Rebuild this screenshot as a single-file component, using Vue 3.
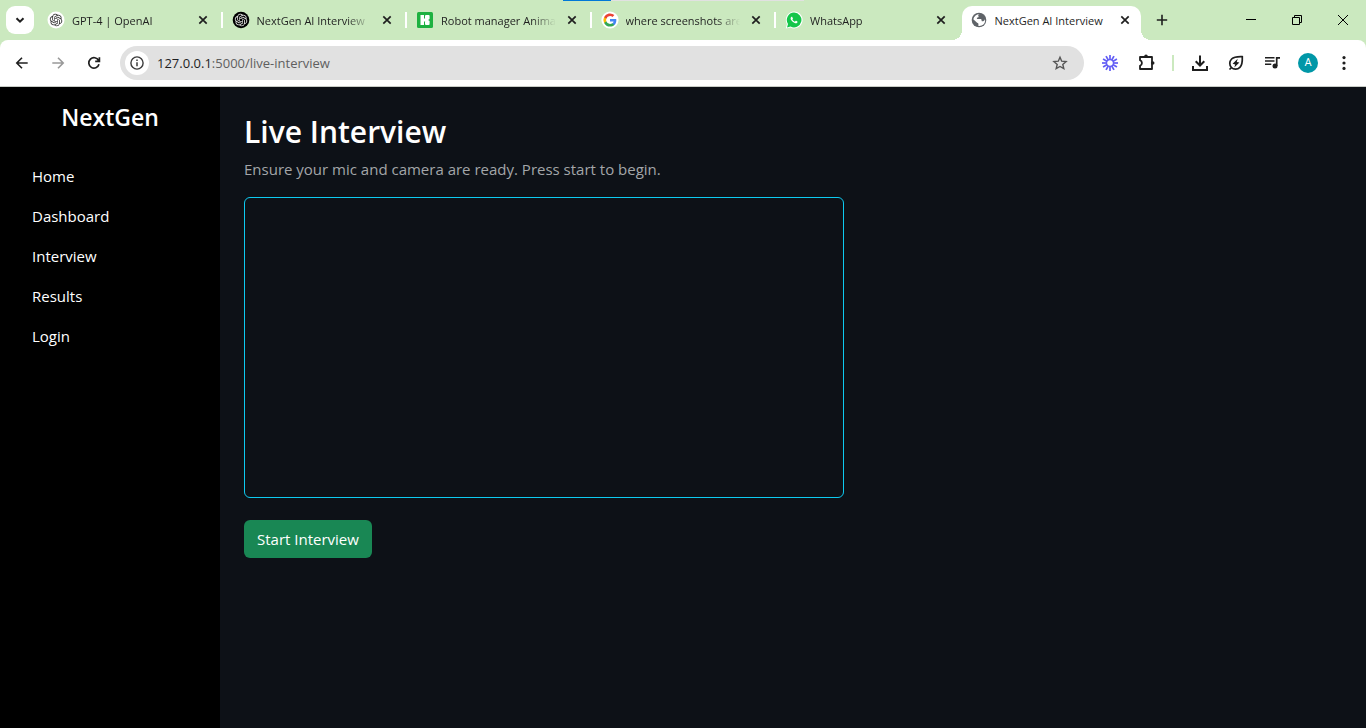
<script setup>
const openai =
  'M22.2819 9.8211a5.9847 5.9847 0 0 0-.5157-4.9108 6.0462 6.0462 0 0 0-6.5098-2.9A6.0651 6.0651 0 0 0 4.9807 4.1818a5.9847 5.9847 0 0 0-3.9977 2.9 6.0462 6.0462 0 0 0 .7427 7.0966 5.98 5.98 0 0 0 .511 4.9107 6.051 6.051 0 0 0 6.5146 2.9001A5.9847 5.9847 0 0 0 13.2599 24a6.0557 6.0557 0 0 0 5.7718-4.2058 5.9894 5.9894 0 0 0 3.9977-2.9001 6.0557 6.0557 0 0 0-.7475-7.0729zm-9.022 12.6081a4.4755 4.4755 0 0 1-2.8764-1.0408l.1419-.0804 4.7783-2.7582a.7948.7948 0 0 0 .3927-.6813v-6.7369l2.02 1.1686a.071.071 0 0 1 .038.052v5.5826a4.504 4.504 0 0 1-4.4945 4.4944zm-9.6607-4.1254a4.4708 4.4708 0 0 1-.5346-3.0137l.142.0852 4.783 2.7582a.7712.7712 0 0 0 .7806 0l5.8428-3.3685v2.3324a.0804.0804 0 0 1-.0332.0615L9.74 19.9502a4.4992 4.4992 0 0 1-6.1408-1.6464zM2.3408 7.8956a4.485 4.485 0 0 1 2.3655-1.9728V11.6a.7664.7664 0 0 0 .3879.6765l5.8144 3.3543-2.0201 1.1685a.0757.0757 0 0 1-.071 0l-4.8303-2.7865A4.504 4.504 0 0 1 2.3408 7.872zm16.5963 3.8558L13.1038 8.364 15.1192 7.2a.0757.0757 0 0 1 .071 0l4.8303 2.7913a4.4944 4.4944 0 0 1-.6765 8.1042v-5.6772a.79.79 0 0 0-.407-.667zm2.0107-3.0231l-.142-.0852-4.7735-2.7818a.7759.7759 0 0 0-.7854 0L9.409 9.2297V6.8974a.0662.0662 0 0 1 .0284-.0615l4.8303-2.7866a4.4992 4.4992 0 0 1 6.6802 4.66zM8.3065 12.863l-2.02-1.1638a.0804.0804 0 0 1-.038-.0567V6.0742a4.4992 4.4992 0 0 1 7.3757-3.4537l-.142.0805L8.704 5.459a.7948.7948 0 0 0-.3927.6813zm1.0976-2.3654l2.602-1.4998 2.6069 1.4998v2.9994l-2.5974 1.4997-2.6067-1.4997Z'

const tabs = [
  { icon: 'openai', title: 'GPT-4 | OpenAI' },
  { icon: 'chatgpt', title: 'NextGen AI Interview' },
  { icon: 'robot', title: 'Robot manager Anima' },
  { icon: 'google', title: 'where screenshots are' },
  { icon: 'whatsapp', title: 'WhatsApp' },
  { icon: 'globe', title: 'NextGen AI Interview', active: true },
]

const links = ['Home', 'Dashboard', 'Interview', 'Results', 'Login']
</script>

<template>
  <div class="window">
    <header class="tabstrip">
      <div class="progress"><span class="progress-done"></span></div>
      <button class="tab-search" aria-label="Search tabs">
        <svg width="16" height="16" viewBox="0 0 16 16"><path d="M4.5 6.2 8 9.7l3.5-3.5" fill="none" stroke="#1f1f1f" stroke-width="2" /></svg>
      </button>
      <div class="tabs">
        <div v-for="(tab, i) in tabs" :key="i" class="tab" :class="{ active: tab.active, divided: i < 4 }">
          <svg v-if="tab.icon === 'openai'" class="favicon" viewBox="0 0 18 18">
            <circle cx="9" cy="9" r="8.5" fill="#fff" />
            <g transform="translate(2.8 2.8) scale(.52)"><path :d="openai" fill="#333" /></g>
          </svg>
          <svg v-else-if="tab.icon === 'chatgpt'" class="favicon" viewBox="0 0 18 18">
            <circle cx="9" cy="9" r="8.3" fill="#000" />
            <g transform="translate(2.8 2.8) scale(.52)"><path :d="openai" fill="#e8e8e8" /></g>
          </svg>
          <svg v-else-if="tab.icon === 'robot'" class="favicon" viewBox="0 0 18 18">
            <rect x="1" y="1" width="16" height="16" rx="1.5" fill="#1db140" />
            <path d="M4.5 4H8v10H4.500zM8 7.500h2v3H8z" fill="#fff" />
            <rect x="9" y="4" width="4.600" height="4.600" rx="1" fill="#fff" />
            <rect x="9" y="9.400" width="4.600" height="4.600" rx="1" fill="#fff" />
            <path d="M9.500 8h3v2h-3z" fill="#fff" />
          </svg>
          <svg v-else-if="tab.icon === 'google'" class="favicon" viewBox="0 0 18 18">
            <circle cx="9" cy="9" r="8.6" fill="#fff" />
            <g transform="translate(2.4 2.4) scale(.55)">
              <path fill="#4285F4" d="M23.5 12.3c0-.8-.1-1.6-.2-2.3H12v4.5h6.5a5.5 5.5 0 0 1-2.4 3.6v3h3.9c2.2-2.1 3.5-5.1 3.5-8.8z" />
              <path fill="#34A853" d="M12 24c3.2 0 6-1.1 7.9-2.9l-3.8-3c-1.1.7-2.5 1.2-4.1 1.2a7.2 7.2 0 0 1-6.7-5H1.3v3.1A12 12 0 0 0 12 24z" />
              <path fill="#FBBC05" d="M5.3 14.3a7.2 7.2 0 0 1 0-4.6V6.6h-4a12 12 0 0 0 0 10.8z" />
              <path fill="#EA4335" d="M12 4.7c1.8 0 3.3.6 4.6 1.8L20 3.1A12 12 0 0 0 1.3 6.6l4 3.1a7.2 7.2 0 0 1 6.7-5z" />
            </g>
          </svg>
          <svg v-else-if="tab.icon === 'whatsapp'" class="favicon" viewBox="0 0 18 18">
            <path d="M9 .6a8.4 8.4 0 1 1-3.6 15.9L.8 17.6l1.1-4.5A8.4 8.4 0 0 1 9 .6z" fill="#fff" />
            <path d="M9 1.6a7.4 7.4 0 1 1-3.5 13.9L2 16.4l1-3.4A7.4 7.4 0 0 1 9 1.6z" fill="#14c64a" />
            <g transform="translate(2.2 2.2) scale(.57)">
              <path fill="#fff" d="M17.472 14.382c-.297-.149-1.758-.867-2.03-.967-.273-.099-.471-.148-.67.15-.197.297-.767.966-.94 1.164-.173.199-.347.223-.644.075-.297-.15-1.255-.463-2.39-1.475-.883-.788-1.48-1.761-1.653-2.059-.173-.297-.018-.458.13-.606.134-.133.298-.347.446-.52.149-.174.198-.298.298-.497.099-.198.05-.371-.025-.52-.075-.149-.669-1.612-.916-2.207-.242-.579-.487-.5-.669-.51-.173-.008-.371-.01-.57-.01-.198 0-.52.074-.792.372-.272.297-1.04 1.016-1.04 2.479 0 1.462 1.065 2.875 1.213 3.074.149.198 2.096 3.2 5.077 4.487.709.306 1.262.489 1.694.625.712.227 1.36.195 1.871.118.571-.085 1.758-.719 2.006-1.413.248-.694.248-1.289.173-1.413-.074-.124-.272-.198-.57-.347" />
            </g>
          </svg>
          <svg v-else class="favicon" viewBox="0 0 18 18">
            <circle cx="9" cy="9" r="7.3" fill="#5f6368" />
            <path d="M9.8 3.2c-1.6.2-1.900 1.100-1.300 2 .5.7-.2 1.200-1 1.300-.9.1-.8 1-.3 1.500h3.300c.9 0 1.100.7 1.100 1.400 0 .8.7 1 1.500.9.9-.2 1.500-1 1.900-2.300a6 6 0 0 1-3.400 6.600c-1.100.4-2.300.5-3.200.3v-1.700c0-.8-.5-1.200-1.300-1.400L3.300 8.200A6 6 0 0 1 9.800 3.200z" fill="#fff" />
          </svg>
          <span class="tab-title">{{ tab.title }}</span>
          <button class="tab-close" aria-label="Close tab">
            <svg width="16" height="16" viewBox="0 0 16 16"><path d="m4.300 4.300 7.400 7.400m0-7.400-7.400 7.400" stroke="#1f1f1f" stroke-width="1.700" /></svg>
          </button>
        </div>
      </div>
      <button class="new-tab" aria-label="New tab">
        <svg width="16" height="16" viewBox="0 0 16 16"><path d="M8 2.800v10.400M2.800 8h10.400" stroke="#1f1f1f" stroke-width="1.600" /></svg>
      </button>
      <div class="controls">
        <button aria-label="Minimize"><svg width="12" height="12" viewBox="0 0 12 12"><path d="M1 5.500h10" stroke="#000" /></svg></button>
        <button aria-label="Restore"><svg width="12" height="12" viewBox="0 0 12 12"><path d="M1.500 3.500h7v7h-7zM3.500 3.500v-2h7v7h-2" fill="none" stroke="#000" /></svg></button>
        <button aria-label="Close"><svg width="12" height="12" viewBox="0 0 12 12"><path d="m1 1 10 10m0-10L1 11" stroke="#000" /></svg></button>
      </div>
    </header>

    <div class="toolbar">
      <button class="tool" aria-label="Back"><svg width="20" height="20" viewBox="0 0 20 20"><path d="M15.700 10H5m5-5.200L4.800 10l5.200 5.200" fill="none" stroke="#1f1f1f" stroke-width="1.600" /></svg></button>
      <button class="tool" aria-label="Forward"><svg width="20" height="20" viewBox="0 0 20 20"><path d="M4.300 10H15m-5-5.200 5.200 5.200-5.200 5.200" fill="none" stroke="#999" stroke-width="1.600" /></svg></button>
      <button class="tool" aria-label="Reload"><svg width="20" height="20" viewBox="0 0 20 20"><path d="M14.600 7.500A5.200 5.200 0 1 0 15 11.300M15.400 4.200v4.200h-4.200" fill="none" stroke="#1f1f1f" stroke-width="1.700" /></svg></button>
      <div class="address">
        <button class="site-info" aria-label="Site information"><svg width="16" height="16" viewBox="0 0 16 16"><circle cx="8" cy="8" r="6.100" fill="none" stroke="#3c3c3c" stroke-width="1.400" /><path d="M8 7.200v4M8 4.500V6" stroke="#3c3c3c" stroke-width="1.500" /></svg></button>
        <a class="url" href="#"><span class="host">127.0.0.1</span>:5000/live-interview</a>
        <button class="star" aria-label="Bookmark this tab"><svg width="18" height="18" viewBox="0 0 18 18"><path d="m9 3.200 1.700 4 4.400.4-3.300 2.900 1 4.200L9 12.500l-3.800 2.200 1-4.200-3.300-2.900 4.400-.4z" fill="none" stroke="#555" stroke-width="1.400" /></svg></button>
      </div>
      <button class="tool" aria-label="Loom">
        <svg width="20" height="20" viewBox="0 0 20 20">
          <g stroke="#625df5" stroke-width="1.700">
            <path v-for="n in 12" :key="n" d="M10 2v4.800" :transform="`rotate(${n * 30} 10 10)`" />
          </g>
          <circle cx="10" cy="10" r="3.400" fill="none" stroke="#625df5" stroke-width="1.200" />
        </svg>
      </button>
      <button class="tool" aria-label="Extensions">
        <svg width="20" height="20" viewBox="0 0 20 20">
          <path d="M4 4h12v12H4v-3.200a3 3 0 0 0 0-5.600z" fill="none" stroke="#1f1f1f" stroke-width="1.800" stroke-linejoin="round" />
          <circle cx="10" cy="3.300" r="1.800" fill="#1f1f1f" />
          <circle cx="16.700" cy="10" r="1.800" fill="#1f1f1f" />
        </svg>
      </button>
      <span class="divider"></span>
      <button class="tool" aria-label="Downloads"><svg width="20" height="20" viewBox="0 0 20 20"><path d="M10 2.500v9.800M5.700 8.300l4.300 4.200 4.300-4.200M3 13v3.900h14V13" fill="none" stroke="#1f1f1f" stroke-width="2" /></svg></button>
      <button class="tool" aria-label="Energy saver"><svg width="20" height="20" viewBox="0 0 20 20"><path d="M3.500 16.500 5 15M16.300 3.700c-4.800-.2-8.200-.1-10.700 2.300-2.400 2.400-2.400 6.200-.2 8.500s6.100 2.300 8.500-.1c2.600-2.600 2.600-5.900 2.400-10.700z" fill="none" stroke="#1f1f1f" stroke-width="1.700" /><path d="M11.700 5.800 6.600 10.700l2.600.7-.9 3.200 5.100-5-2.600-.6z" fill="#1f1f1f" /></svg></button>
      <button class="tool" aria-label="Media controls"><svg width="20" height="20" viewBox="0 0 20 20"><path d="M3 4.800h9.500M3 8h9.500M3 11.200h6.300" stroke="#1f1f1f" stroke-width="1.600" /><circle cx="13" cy="13" r="2.500" fill="#1f1f1f" /><path d="M14.700 13V4.800h3.300" fill="none" stroke="#1f1f1f" stroke-width="1.700" /></svg></button>
      <button class="tool" aria-label="Profile"><span class="avatar">A</span></button>
      <button class="tool" aria-label="Menu"><svg width="20" height="20" viewBox="0 0 20 20" fill="#1f1f1f"><circle cx="10" cy="4.600" r="1.600" /><circle cx="10" cy="10" r="1.600" /><circle cx="10" cy="15.400" r="1.600" /></svg></button>
    </div>

    <div class="page">
      <nav class="sidebar">
        <h2 class="brand">NextGen</h2>
        <a v-for="link in links" :key="link" class="nav-link" href="#">{{ link }}</a>
      </nav>
      <main class="content">
        <h1 class="heading">Live Interview</h1>
        <p class="lead">Ensure your mic and camera are ready. Press start to begin.</p>
        <video class="preview"></video>
        <button class="start">Start Interview</button>
      </main>
    </div>
  </div>
</template>

<style>
body {
  background: #0d1117;
}
</style>

<style scoped>
.window {
  display: flex;
  flex-direction: column;
  min-height: 100vh;
  font-family: "Segoe UI", "Open Sans", "Noto Sans", sans-serif;
}

.window,
.window * {
  box-sizing: border-box;
}

button {
  display: flex;
  align-items: center;
  justify-content: center;
  padding: 0;
  border: 0;
  background: none;
  font: inherit;
}

svg {
  display: block;
  flex: none;
}

a {
  text-decoration: none;
}

.tabstrip {
  position: relative;
  display: flex;
  align-items: center;
  height: 40px;
  padding-left: 6px;
  background: #cbe9bf;
}

.progress {
  position: absolute;
  top: 0;
  left: 563px;
  width: 241px;
  height: 1px;
  background: #e1e1e1;
}

.progress-done {
  display: block;
  width: 20%;
  height: 1px;
  background: #0078d7;
}

.tab-search {
  flex: none;
  width: 28px;
  height: 28px;
  margin-right: 4px;
  border-radius: 9px;
  background: #fff;
}

.tabs {
  display: flex;
  flex: 0 1 1110px;
  align-self: stretch;
  min-width: 0;
}

.tab {
  position: relative;
  display: flex;
  flex: 1 1 0;
  align-items: center;
  min-width: 0;
  padding: 0 12px 0 9px;
}

.divided::after {
  position: absolute;
  top: 12px;
  right: 0;
  width: 2px;
  height: 16px;
  background: #fff;
  content: "";
}

.active {
  margin: 6px 7px 0 1px;
  padding: 0 8px 6px;
  border-radius: 10px 10px 0 0;
  background: #fff;
}

.active::before,
.active::after {
  position: absolute;
  bottom: 0;
  width: 10px;
  height: 10px;
  content: "";
}

.active::before {
  right: 100%;
  background: radial-gradient(circle at 0 0, transparent 10px, #fff 10px);
}

.active::after {
  left: 100%;
  background: radial-gradient(circle at 100% 0, transparent 10px, #fff 10px);
}

.favicon {
  width: 18px;
  height: 18px;
}

.tab-title {
  flex: 1;
  min-width: 0;
  margin: 0 8px 0 7px;
  padding-top: 2px;
  overflow: hidden;
  color: #1f1f1f;
  font-size: 11px;
  line-height: 18px;
  white-space: nowrap;
  mask-image: linear-gradient(to right, #000 calc(100% - 24px), transparent);
}

.active .tab-title {
  mask-image: none;
}

.tab-close {
  flex: none;
  width: 16px;
  height: 16px;
}

.new-tab {
  flex: none;
  width: 28px;
  height: 28px;
}

.controls {
  display: flex;
  flex: none;
  align-self: stretch;
  margin-left: auto;
}

.controls button {
  width: 46px;
}

.toolbar {
  display: flex;
  align-items: center;
  height: 47px;
  padding: 0 4px;
  border-bottom: 1px solid #c9cdc7;
  border-radius: 8px 8px 0 0;
  background: #fff;
  box-shadow: 0 -8px 0 #cbe9bf;
  clip-path: inset(0);
}

.tool {
  flex: none;
  width: 36px;
  height: 34px;
}

.address {
  display: flex;
  flex: 1;
  align-items: center;
  min-width: 0;
  height: 34px;
  margin: 0 8px;
  padding: 0 15px 0 5px;
  border-radius: 17px;
  background: #e1e1e1;
}

.site-info {
  flex: none;
  width: 24px;
  height: 24px;
  margin-right: 8px;
  border-radius: 50%;
  background: #fff;
}

.url {
  flex: 1;
  min-width: 0;
  overflow: hidden;
  color: #5f5f5f;
  font-size: 13px;
  line-height: 20px;
  white-space: nowrap;
}

.host {
  color: #1f1f1f;
}

.divider {
  flex: none;
  width: 2px;
  height: 16px;
  margin: 0 8px;
  background: #cbe9bf;
}

.avatar {
  width: 20px;
  height: 20px;
  border-radius: 50%;
  background: #0097a7;
  color: #fff;
  font-family: Roboto, sans-serif;
  font-size: 11px;
  line-height: 20px;
  text-align: center;
}

.page {
  display: flex;
  flex: 1;
  background: #0d1117;
  color: #fff;
  font-size: 15px;
  line-height: 24px;
}

.sidebar {
  flex: none;
  width: 220px;
  padding: 16px;
  background: #000;
}

.brand {
  margin: 0 0 24px;
  font-size: 23px;
  font-weight: 600;
  line-height: 29px;
  text-align: center;
}

.nav-link {
  display: block;
  padding: 8px 16px;
  color: #fff;
}

.content {
  flex: 1;
  min-width: 0;
  padding: 24px;
}

.heading {
  margin: 0 0 4px;
  font-size: 30px;
  font-weight: 600;
  line-height: 42px;
}

.lead {
  margin: 0 0 16px;
  color: #a3a6a9;
}

.preview {
  display: block;
  width: 100%;
  max-width: 600px;
  height: 301px;
  margin-bottom: 22px;
  border: 1px solid #0dcaf0;
  border-radius: 6px;
}

.start {
  height: 38px;
  padding: 0 13px;
  border-radius: 6px;
  background: #198754;
  color: #fff;
}
</style>
